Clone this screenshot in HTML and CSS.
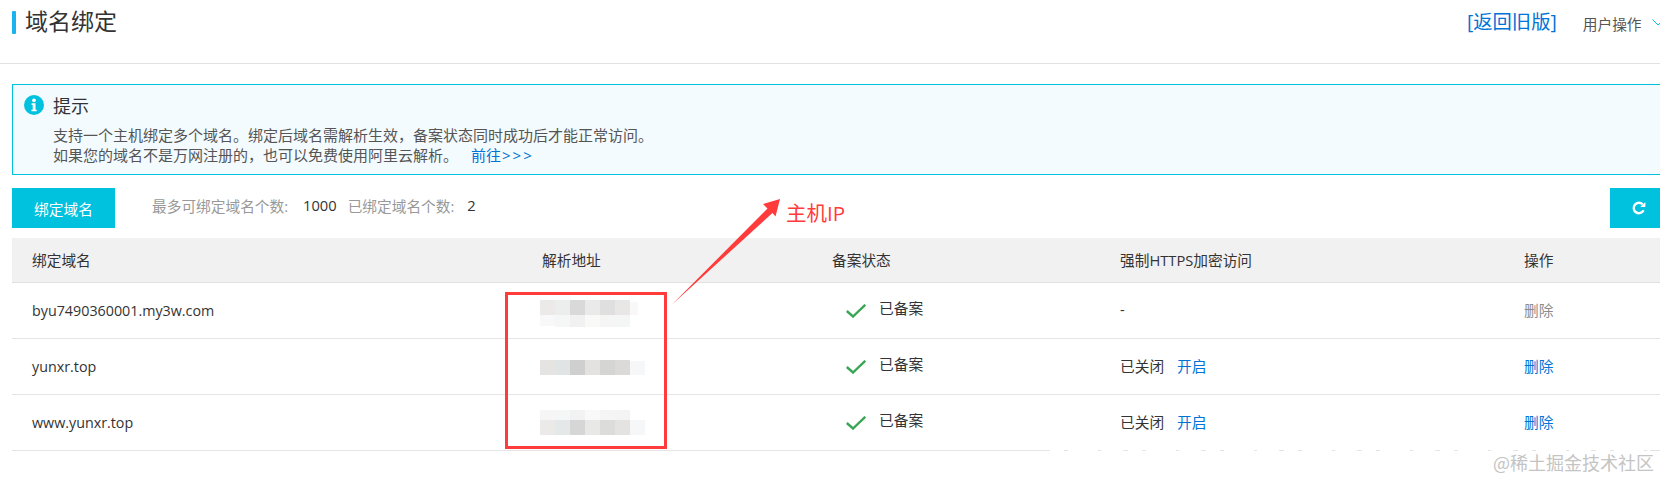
FILE: index.html
```html
<!DOCTYPE html>
<html lang="zh-CN">
<head>
<meta charset="utf-8">
<title>域名绑定</title>
<link rel="stylesheet" href="styles.css">
</head>
<body>
<div class="page">
  <header class="top">
    <div class="title"><span class="title-bar"></span><h1>域名绑定</h1></div>
    <div class="top-right">
      <a class="back">[返回旧版]</a>
      <span class="user">用户操作</span>
      <svg class="chev" width="12" height="8" viewBox="0 0 12 8"><path d="M0.5 0.5L6 6L11.5 0.5" fill="none" stroke="#00c1de" stroke-width="1"/></svg>
    </div>
  </header>
  <section class="alert">
    <div class="alert-head">
      <svg class="info" width="20" height="20" viewBox="0 0 20 20"><circle cx="10" cy="10" r="10" fill="#00c1de"/><circle cx="10" cy="5.3" r="1.9" fill="#fff"/><path d="M7.6 8.3h3.9v6.4h1.2v1.6H7.4v-1.600h1.300v-4.800H7.600z" fill="#fff"/></svg>
      <span class="alert-title">提示</span>
    </div>
    <p class="alert-text">支持一个主机绑定多个域名。绑定后域名需解析生效，备案状态同时成功后才能正常访问。<br>如果您的域名不是万网注册的，也可以免费使用阿里云解析。<a class="go">前往<span class="gt">&gt;&gt;&gt;</span></a></p>
  </section>
  <div class="toolbar">
    <button class="btn">绑定域名</button>
    <div class="meta"><span>最多可绑定域名个数:</span><b>1000</b><span>已绑定域名个数:</span><b>2</b></div>
    <button class="refresh"><svg width="16" height="16" viewBox="0 0 16 16"><path d="M12.6 10.2A5.2 5.2 0 1 1 11.6 4.3" fill="none" stroke="#fff" stroke-width="2.4"/><path d="M9.2 7.1L14.4 7.1L14.4 1.9z" fill="#fff"/></svg></button>
  </div>
  <table class="tbl">
    <colgroup><col class="c1"><col class="c2"><col class="c3"><col class="c4"><col class="c5"></colgroup>
    <thead><tr><th>绑定域名</th><th>解析地址</th><th>备案状态</th><th>强制HTTPS加密访问</th><th>操作</th></tr></thead>
    <tbody>
      <tr>
        <td class="dom">byu7490360001.my3w.com</td><td></td>
        <td><div class="state"><svg width="20" height="14" viewBox="0 0 20 14"><path d="M0.8 7L7 12.500L19.300 0.800" fill="none" stroke="#3aa655" stroke-width="2.400"/></svg><span>已备案</span></div></td>
        <td class="act">-</td><td class="act"><a class="del off">删除</a></td>
      </tr>
      <tr>
        <td class="dom">yunxr.top</td><td></td>
        <td><div class="state"><svg width="20" height="14" viewBox="0 0 20 14"><path d="M0.8 7L7 12.500L19.300 0.800" fill="none" stroke="#3aa655" stroke-width="2.400"/></svg><span>已备案</span></div></td>
        <td class="act">已关闭<a class="open">开启</a></td><td class="act"><a class="del">删除</a></td>
      </tr>
      <tr>
        <td class="dom">www.yunxr.top</td><td></td>
        <td><div class="state"><svg width="20" height="14" viewBox="0 0 20 14"><path d="M0.8 7L7 12.500L19.300 0.800" fill="none" stroke="#3aa655" stroke-width="2.400"/></svg><span>已备案</span></div></td>
        <td class="act">已关闭<a class="open">开启</a></td><td class="act"><a class="del">删除</a></td>
      </tr>
    </tbody>
  </table>
  <svg class="annot" width="1660" height="481" viewBox="0 0 1660 481">
    <g>
      <rect x="540" y="300" width="15" height="15" fill="#eceae8"/><rect x="555" y="300" width="15" height="15" fill="#eceeed"/><rect x="570" y="300" width="15" height="15" fill="#d9d9d9"/><rect x="585" y="300" width="15" height="15" fill="#eaeaea"/><rect x="600" y="300" width="15" height="15" fill="#dfdfdf"/><rect x="615" y="300" width="15" height="15" fill="#e9e7e6"/><rect x="630" y="302" width="8" height="13" fill="#f8f8f8"/>
      <rect x="540" y="315" width="15" height="11" fill="#f8f8f8"/><rect x="555" y="315" width="15" height="12" fill="#f5f6f6"/><rect x="570" y="315" width="15" height="12" fill="#f1f1f1"/><rect x="585" y="315" width="15" height="12" fill="#f9f9f8"/><rect x="600" y="315" width="15" height="12" fill="#f5f5f5"/><rect x="615" y="315" width="15" height="12" fill="#f4f5f5"/>
      <rect x="540" y="360" width="15" height="15" fill="#e5e4e2"/><rect x="555" y="360" width="15" height="15" fill="#e1e4e4"/><rect x="570" y="360" width="15" height="15" fill="#cfcfcf"/><rect x="585" y="360" width="15" height="15" fill="#e3e2e0"/><rect x="600" y="360" width="15" height="15" fill="#d5d5d3"/><rect x="615" y="360" width="15" height="15" fill="#dbdad8"/><rect x="630" y="361" width="15" height="14" fill="#f6f7f9"/>
      <rect x="540" y="410" width="15" height="10" fill="#f6f6f6"/><rect x="555" y="410" width="15" height="10" fill="#f5f6f6"/><rect x="570" y="410" width="15" height="10" fill="#f2f2f2"/><rect x="585" y="410" width="15" height="10" fill="#f9f9f9"/><rect x="600" y="410" width="15" height="10" fill="#f5f5f5"/><rect x="615" y="410" width="15" height="10" fill="#f4f4f4"/>
      <rect x="540" y="420" width="15" height="15" fill="#eceae8"/><rect x="555" y="420" width="15" height="15" fill="#e5e8e8"/><rect x="570" y="420" width="15" height="15" fill="#d6d6d6"/><rect x="585" y="420" width="15" height="15" fill="#e8e8e6"/><rect x="600" y="420" width="15" height="15" fill="#dcdcda"/><rect x="615" y="420" width="15" height="15" fill="#e4e3e1"/><rect x="630" y="420" width="15" height="15" fill="#f6f7f9"/>
    </g>
    <rect x="506.500" y="293.500" width="159" height="154" fill="none" stroke="#ff3b3b" stroke-width="3"/>
    <path d="M780 199L763 204L767.500 208.500L671.500 305L772.500 213L775.500 216.500z" fill="#ff3b3b"/>
    <path d="M1050 450.500H1650" stroke="#fff" stroke-width="2" stroke-dasharray="14 4 30 3 22 5"/>
  </svg>
  <span class="label">主机IP</span>
  <span class="mark">@稀土掘金技术社区</span>
</div>
</body>
</html>
```
FILE: styles.css
```css
* { box-sizing: border-box; }
html, body { margin: 0; padding: 0; }
body {
  width: 1660px;
  height: 481px;
  overflow: hidden;
  background: #fff;
  color: #333;
  font-family: "Open Sans", "Noto Sans CJK SC", sans-serif;
  font-size: 14.7px;
}
.page { position: relative; width: 1660px; height: 481px; overflow: hidden; }
.top {
  height: 64px;
  border-bottom: 1px solid #e1e1e1;
  display: flex;
  justify-content: space-between;
  align-items: flex-start;
  padding-left: 12px;
}
.title { display: flex; align-items: center; margin-top: 11px; height: 23px; }
.title-bar { width: 4px; height: 23px; background: #1ab3f0; border-radius: 1px; }
h1 { margin: -2px 0 0 9px; font-size: 23px; font-weight: 400; line-height: 23px; color: #333; }
.top-right { display: flex; align-items: center; height: 42px; width: 193px; flex: none; }
.back { font-size: 19.3px; color: #0073d6; flex: none; }
.user { font-size: 14.7px; color: #555; margin-left: 26px; margin-top: 4px; flex: none; }
.chev { margin-left: 10px; margin-top: 4px; flex: none; }
.alert {
  margin: 20px 0 0 12px;
  height: 91px;
  border: 1px solid #00c1de;
  border-right: 0;
  background: #f3fbfe;
  padding: 9px 0 0 11px;
}
.alert-head { display: flex; align-items: center; height: 21px; }
.alert-title { font-size: 18px; margin-left: 9px; color: #333; }
.alert-text { margin: 10px 0 0 29px; line-height: 20px; color: #555; font-size: 15px; }
.go { color: #0073d6; margin-left: 13px; }
.gt { letter-spacing: 2px; margin-left: 1px; }
.toolbar { display: flex; align-items: center; margin: 13px 0 0 12px; height: 40px; }
.btn {
  width: 103px; height: 40px; border: 0; padding: 0;
  background: #00c1de; color: #fff;
  font: inherit;
}
.meta { display: flex; margin-left: 37px; margin-top: -5px; color: #999; }
.meta b { font-weight: 400; color: #333; margin: 0 11px 0 15px; }
.meta b:last-child { margin-left: 13px; }
.refresh {
  margin-left: auto; width: 50px; height: 40px; border: 0; padding: 0 0 0 7px;
  background: #00c1de; display: flex; align-items: center; justify-content: center;
}
.tbl { margin: 10px 0 0 12px; width: 1648px; border-collapse: collapse; table-layout: fixed; }
.c1 { width: 510px; } .c2 { width: 290px; } .c3 { width: 288px; } .c4 { width: 404px; } .c5 { width: 156px; }
.tbl th {
  height: 44px; background: #f1f1f1; font-weight: 400; text-align: left;
  padding: 0 0 0 20px; border-bottom: 1px solid #e1e1e1; color: #333;
}
.tbl td { height: 56px; padding: 0 0 0 20px; border-bottom: 1px solid #e4e4e4; color: #333; }
.tbl .dom { font-size: 14.3px; }
.tbl .act { padding-bottom: 2px; }
.state { display: flex; align-items: center; margin-left: 14px; }
.state span { margin-left: 13px; margin-top: -5px; }
.state svg { margin-top: 1px; }
.open { color: #0073d6; margin-left: 13px; }
.del { color: #0073d6; }
.del.off { color: #8c8c8c; }
.annot { position: absolute; left: 0; top: 0; pointer-events: none; }
.label { position: absolute; left: 786px; top: 199px; font-size: 20.5px; line-height: 28px; color: #ff3b3b; }
.mark {
  position: absolute; right: 6px; top: 450px; font-size: 18px; line-height: 24px; color: #c4c4c4;
  font-family: "Noto Sans CJK SC", sans-serif;
}
```
